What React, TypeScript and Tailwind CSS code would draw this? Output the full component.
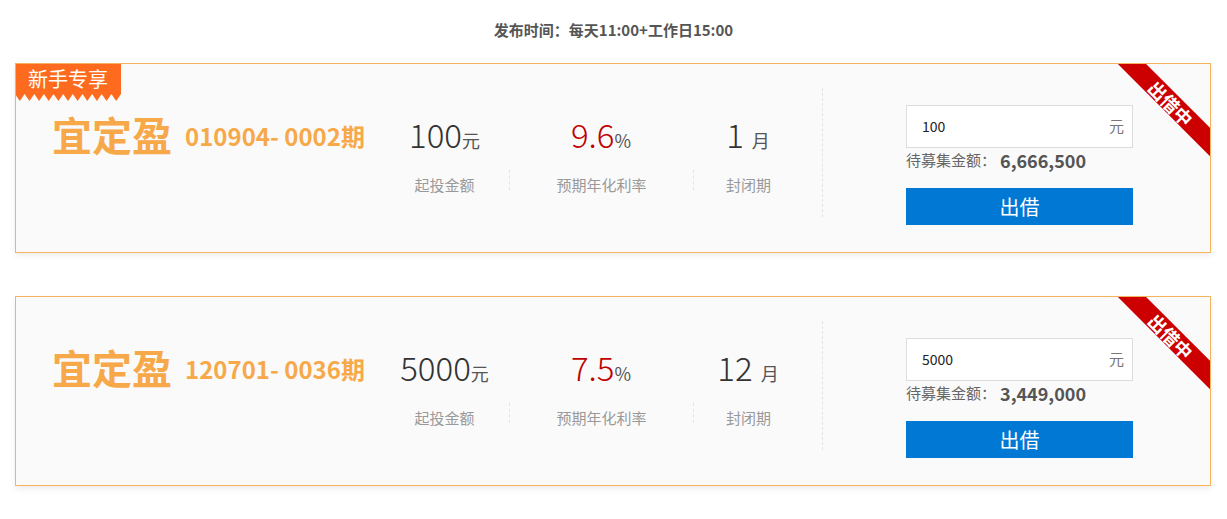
const FONT = "font-['Noto_Sans_CJK_SC','Noto_Sans',sans-serif]";

type Product = {
  code: string;
  min: string;
  rate: string;
  term: string;
  amount: string;
  remain: string;
  newbie?: boolean;
};

const products: Product[] = [
  { code: "010904- 0002期", min: "100", rate: "9.6", term: "1", amount: "100", remain: "6,666,500", newbie: true },
  { code: "120701- 0036期", min: "5000", rate: "7.5", term: "12", amount: "5000", remain: "3,449,000" },
];

function NewbieBadge() {
  // zigzag bottom edge
  const teeth = 11;
  const w = 106;
  const step = w / teeth;
  let pts = "0,0 106,0 106,31";
  for (let i = teeth - 1; i >= 0; i--) {
    pts += ` ${(i * step + step / 2).toFixed(1)},38 ${(i * step).toFixed(1)},31`;
  }
  return (
    <div className="absolute left-[-1px] top-[-1px] z-10 h-[38px] w-[106px]">
      <svg width="106" height="38" className="absolute inset-0">
        <polygon points={pts} fill="#ff6b1e" />
      </svg>
      <span className="relative flex h-[31px] items-center justify-center text-[20px] leading-none text-white">
        新手专享
      </span>
    </div>
  );
}

function Ribbon() {
  return (
    <div className="absolute right-[-41px] top-[29px] flex h-[20px] w-[160px] rotate-45 items-center justify-center bg-[#cc0000] text-[18px] font-bold leading-none text-white">
      出借中
    </div>
  );
}

function Card({ p }: { p: Product }) {
  return (
    <div className="relative flex h-[190px] overflow-hidden border border-[#f4b45e] bg-[#fafafa] shadow-[0_3px_6px_rgba(0,0,0,0.07)]">
      {p.newbie && <NewbieBadge />}
      <Ribbon />

      <div className="flex pt-[50px]">
        {/* title */}
        <div className="flex h-[40px] w-[364px] items-center pl-[36px]">
          <span className="text-[40px] font-bold leading-none text-[#f7a94a]">宜定盈</span>
          <span className="ml-[13px] mt-[4px] text-[24px] font-bold leading-none text-[#f7a94a]">{p.code}</span>
        </div>

        {/* stats */}
        <div className="flex flex-col">
          <div className="flex h-[40px] items-center">
            <div className="flex w-[129px] items-baseline justify-center text-[#333]">
              <span className="text-[33px] font-light leading-none">{p.min}</span>
              <span className="text-[18px] leading-none text-[#555]">元</span>
            </div>
            <div className="flex w-[184px] items-baseline justify-center">
              <span className="text-[33px] font-light leading-none text-[#c00000]">{p.rate}</span>
              <span className="text-[18px] leading-none text-[#555]">%</span>
            </div>
            <div className="flex w-[110px] items-baseline justify-center text-[#333]">
              <span className="text-[33px] font-light leading-none">{p.term}</span>
              <span className="ml-[8px] text-[18px] leading-none text-[#555]">月</span>
            </div>
          </div>
          <div className="mt-[16px] flex items-start text-[15px] leading-[20px] text-[#999]">
            <div className="mt-[5px] flex w-[129px] justify-center">起投金额</div>
            <div className="h-[20px] border-l border-dashed border-[#e3e3e3]" />
            <div className="mt-[5px] flex w-[183px] justify-center">预期年化利率</div>
            <div className="h-[20px] border-l border-dashed border-[#e3e3e3]" />
            <div className="mt-[5px] flex w-[109px] justify-center">封闭期</div>
          </div>
        </div>
      </div>

      {/* big divider */}
      <div className="ml-[19px] mt-[24px] h-[129px] border-l border-dashed border-[#e3e3e3]" />

      {/* invest */}
      <div className="ml-[83px] w-[227px] pt-[41px]">
        <div className="flex h-[43px] items-center justify-between border border-[#dcdcdc] bg-white pl-[15px] pr-[8px]">
          <span className="text-[14px] text-[#222]">{p.amount}</span>
          <span className="text-[15px] text-[#777]">元</span>
        </div>
        <div className="mt-[1px] flex h-[22px] items-center">
          <span className="text-[15px] text-[#666]">待募集金额：</span>
          <span className="ml-[4px] text-[18px] font-bold text-[#555]">{p.remain}</span>
        </div>
        <button className="mt-[17px] flex h-[37px] w-full items-center justify-center bg-[#0078d4] text-[20px] text-white">
          出借
        </button>
      </div>
    </div>
  );
}

export default function App() {
  return (
    <div className={`${FONT} min-h-[519px] bg-white`}>
      <div className="flex h-[63px] items-center justify-center pb-[2px] text-[15px] font-bold text-[#555]">
        发布时间：每天11:00+工作日15:00
      </div>
      <div className="ml-[15px] flex w-[1196px] flex-col gap-[43px]">
        {products.map((p) => (
          <Card key={p.code} p={p} />
        ))}
      </div>
    </div>
  );
}
